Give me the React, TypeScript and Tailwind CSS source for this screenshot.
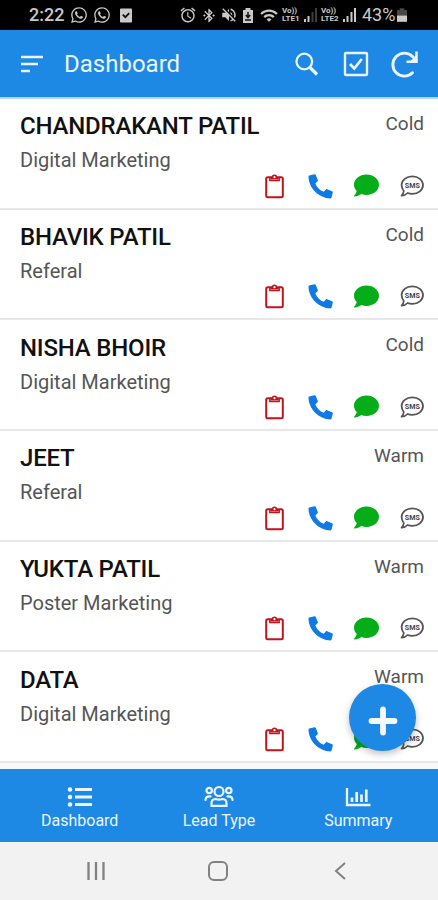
import React from "react";
import { FaComment, FaWhatsapp } from "react-icons/fa";
import { MdAlarm, MdBluetoothConnected, MdVolumeOff, MdWifi } from "react-icons/md";

const leads = [
  { name: "CHANDRAKANT PATIL", source: "Digital Marketing", status: "Cold" },
  { name: "BHAVIK PATIL", source: "Referal", status: "Cold" },
  { name: "NISHA BHOIR", source: "Digital Marketing", status: "Cold" },
  { name: "JEET", source: "Referal", status: "Warm" },
  { name: "YUKTA PATIL", source: "Poster Marketing", status: "Warm" },
  { name: "DATA", source: "Digital Marketing", status: "Warm" },
];

function Network({ sim }: { sim: number }) {
  return (
    <div className="flex shrink-0 items-center">
      <div className="flex w-[21px] flex-col text-[8px] leading-[8px] font-bold">
        <span className="block h-[8px]">Vo))</span>
        <span className="block h-[8px]">LTE{sim}</span>
      </div>
      <svg className="h-[14px] w-[15px]" viewBox="0 0 15 14" fill="currentColor">
        <path d="M1 11h2v3H1z" />
        <path d="M4.500 8h2v6h-2z" />
        <path d="M8.500 4h2v10h-2z" opacity={sim === 1 ? 0.3 : 1} />
        <path d="M12 0h2v14h-2z" opacity={sim === 1 ? 0.3 : 1} />
      </svg>
    </div>
  );
}

function StatusBar() {
  return (
    <div className="flex h-[30px] shrink-0 items-center bg-black pl-[29px] text-[#c9c9c9]">
      <span className="w-[41px] shrink-0 text-[18px] leading-none font-medium">2:22</span>
      <FaWhatsapp className="h-[18px] w-[18px] shrink-0" />
      <FaWhatsapp className="ml-[5px] h-[18px] w-[18px] shrink-0" />
      <svg className="ml-[9px] h-[15px] w-[12px] shrink-0" viewBox="0 0 13 15">
        <rect width="13" height="15" rx="1" fill="currentColor" />
        <path d="M3 6.500l2.800 2.800L10 5" fill="none" stroke="#111" strokeWidth="2" />
      </svg>
      <MdAlarm className="ml-[47px] h-[18px] w-[18px] shrink-0" />
      <MdBluetoothConnected className="ml-[4px] h-[17px] w-[16px] shrink-0" />
      <MdVolumeOff className="ml-[3px] h-[18px] w-[18px] shrink-0" />
      <svg className="ml-[4px] h-[15px] w-[12px] shrink-0" viewBox="0 0 12 15">
        <path d="M3.500 0h5v2H11v13H1V2h2.500z" fill="currentColor" />
        <path d="M6 4v5M3.800 7L6 9.500 8.200 7M3 12h6" fill="none" stroke="#111" strokeWidth="1.500" />
      </svg>
      <MdWifi className="ml-[5px] h-[19px] w-[20px] shrink-0" />
      <div className="ml-[3px] flex shrink-0 gap-[3px]">
        <Network sim={1} />
        <Network sim={2} />
      </div>
      <span className="ml-[5px] w-[35px] shrink-0 text-[18px] leading-none">43%</span>
      <svg className="h-[14px] w-[10px] shrink-0" viewBox="0 0 11 15" fill="currentColor">
        <path d="M3 0h5v2h3v6H0V2h3z" opacity="0.350" />
        <path d="M0 8h11v7H0z" />
      </svg>
    </div>
  );
}

function Header() {
  return (
    <header className="flex h-[69px] shrink-0 items-center border-b-2 border-[#afd5f7] bg-[#1e88e5] text-[#eaf5ff]">
      <svg className="ml-[20px] h-[20px] w-[24px]" viewBox="0 0 24 20" stroke="currentColor" strokeWidth="2.600">
        <path d="M1 3h22M1 10h17M1 17h9" />
      </svg>
      <h1 className="ml-[20px] w-[230px] text-[24px] leading-[30px] font-normal">Dashboard</h1>
      <svg className="h-[26px] w-[26px]" viewBox="0 0 26 26" fill="none" stroke="currentColor">
        <circle cx="10.300" cy="10.500" r="7.800" strokeWidth="2.300" />
        <path d="M16 16.500l7 7" strokeWidth="3.200" />
      </svg>
      <svg className="ml-[23px] h-[26px] w-[26px]" viewBox="0 0 26 26" fill="none" stroke="currentColor" strokeWidth="2.400">
        <rect x="2" y="2" width="22" height="22" rx="1" />
        <path d="M7 13l4.300 4.500 7.500-9.500" strokeWidth="2.700" />
      </svg>
      <svg className="ml-[21px] h-[28px] w-[30px]" viewBox="0 0 30 28" fill="none" stroke="currentColor">
        <path d="M22.500 22.800A11.500 11.500 0 1 1 22.500 6.500L26 10" strokeWidth="2.900" strokeLinecap="round" />
        <path d="M26.500 1.500v10.300H16.500" strokeWidth="2.500" />
        <path d="M26.500 5v7h-7z" fill="currentColor" stroke="none" />
      </svg>
    </header>
  );
}

function ClipboardIcon() {
  return (
    <svg className="h-[26px] w-[20px]" viewBox="0 0 20 26" fill="none" stroke="#c1141b">
      <rect x="1.200" y="4.200" width="16.600" height="20" rx="1.500" strokeWidth="2" />
      <path d="M4.800 4.500v3h9.400v-3" strokeWidth="1.400" />
      <path d="M6 6V4.500h1.500a2 2 0 0 1 4 0H13V6z" fill="#c1141b" strokeWidth="1.200" />
      <path d="M7.800 4.200a1.700 1.700 0 0 1 3.400 0" strokeWidth="2" />
      <circle cx="9.500" cy="4.200" r="1.100" fill="white" stroke="none" />
    </svg>
  );
}

function PhoneIcon() {
  return (
    <svg className="h-[26px] w-[26px]" viewBox="0 0 26 26" fill="#0f7ae5">
      <path d="M1.200 2.500L6.500 1.300c.6-.1 1.100.1 1.300.7l2 5c.2.500.1 1-.3 1.300L7.300 10.400c1.700 4 4.500 6.800 8.400 8.400l2.100-2.300c.3-.4.800-.5 1.300-.3l5 2.100c.6.200.8.700.7 1.300l-1.200 5c-.1.500-.5.800-1.100.8C11 25.300.6 15 .5 3.500c0-.6.200-.9.700-1z" />
    </svg>
  );
}

function SmsIcon() {
  return (
    <svg className="h-[26px] w-[26px]" viewBox="0 0 26 26">
      <path d="M13.300 3.300c6 0 10.700 3.900 10.700 8.800s-4.700 8.800-10.700 8.800c-1.700 0-3.300-.3-4.700-.9-1.400 1.500-3.300 2.500-6 2.700 1.300-1.300 2-2.900 2.200-4.700-1.400-1.600-2.200-3.700-2.200-5.900 0-4.900 4.700-8.800 10.700-8.800z" fill="white" stroke="#555" strokeWidth="1.800" strokeLinejoin="round" />
      <text x="13.300" y="15.200" textAnchor="middle" fontSize="8" fontWeight="700" fill="#444" textLength="15" lengthAdjust="spacingAndGlyphs">SMS</text>
    </svg>
  );
}

function LeadRow({ lead }: { lead: (typeof leads)[number] }) {
  return (
    <li className="flex h-[110.7px] shrink-0 justify-between border-b-2 border-[#e7e7e7] pr-[13px] pl-[20px]">
      <div className="pt-[12.300px]">
        <h2 className="text-[24px] leading-[30px] font-medium tracking-[-0.2px] whitespace-nowrap text-[#111]">{lead.name}</h2>
        <p className="mt-[5px] text-[20px] leading-[28px] text-[#555]">{lead.source}</p>
      </div>
      <div className="flex flex-col items-end">
        <span className="mt-[12px] mr-px text-[19px] leading-[26px] text-[#555]">{lead.status}</span>
        <div className="mt-[35.500px] flex items-center">
          <ClipboardIcon />
          <span className="ml-[23px]"><PhoneIcon /></span>
          <FaComment className="ml-[20px] h-[25px] w-[25px] text-[#05ad18]" />
          <span className="ml-[20px]"><SmsIcon /></span>
        </div>
      </div>
    </li>
  );
}

function ListIcon() {
  return (
    <svg className="h-[22px] w-[26px]" viewBox="0 0 26 22" fill="none" stroke="currentColor">
      <path d="M8 3.500h17M8 11h17M8 18.500h17" strokeWidth="3" />
      <path d="M3 3.500h.01M3 11h.01M3 18.500h.01" strokeWidth="4.600" strokeLinecap="round" />
    </svg>
  );
}

function PeopleIcon() {
  return (
    <svg className="ml-px h-[23px] w-[32px]" viewBox="0 0 32 23" fill="none" stroke="currentColor" strokeWidth="2.200" strokeLinecap="round">
      <circle cx="16" cy="6.500" r="4.500" />
      <circle cx="6.200" cy="5.500" r="2.700" />
      <circle cx="25.800" cy="5.500" r="2.700" />
      <path d="M8.500 20.800v-2.600c0-2.800 2-4.200 4.400-4.200 2 .8 4.200.8 6.200 0 2.400 0 4.400 1.400 4.400 4.200v2.600zM2.500 15c0-2.300 1.300-3.600 4-3.600h1M29.500 15c0-2.300-1.300-3.600-4-3.600h-1" />
    </svg>
  );
}

function ChartIcon() {
  return (
    <svg className="h-[22px] w-[26px]" viewBox="0 0 26 22" fill="none" stroke="currentColor">
      <path d="M2 2v17h23.500" strokeWidth="2.300" />
      <path d="M7 11.500V16M11.700 6v10M16.500 8.500V16M21.300 3.500V16" strokeWidth="2.700" />
    </svg>
  );
}

function BottomTabs() {
  const tabs = [
    { label: "Dashboard", icon: <ListIcon /> },
    { label: "Lead Type", icon: <PeopleIcon /> },
    { label: "Summary", icon: <ChartIcon /> },
  ];
  return (
    <nav className="flex h-[73px] shrink-0 justify-center bg-[#1e88e5] text-[#eaf5ff]">
      {tabs.map((tab) => (
        <div key={tab.label} className="flex w-[139.3px] flex-col items-center pt-[16px]">
          <div className="flex h-[23px] items-center">{tab.icon}</div>
          <span className="mt-[3px] text-[16px] leading-[20px]">{tab.label}</span>
        </div>
      ))}
    </nav>
  );
}

function SystemNav() {
  return (
    <div className="flex grow items-center bg-[#f2f2f2] pl-[86px] text-[#818181]">
      <svg className="h-[20px] w-[20px]" viewBox="0 0 20 20" stroke="currentColor" strokeWidth="2.300">
        <path d="M2.500 1v18M10 1v18M17.500 1v18" />
      </svg>
      <svg className="ml-[101px] h-[22px] w-[22px]" viewBox="0 0 22 22" fill="none" stroke="currentColor" strokeWidth="2">
        <rect x="2" y="2" width="18" height="18" rx="5" />
      </svg>
      <svg className="ml-[105px] h-[20px] w-[12px]" viewBox="0 0 12 20" fill="none" stroke="currentColor" strokeWidth="2">
        <path d="M11 2L2 10l9 8" />
      </svg>
    </div>
  );
}

export default function App() {
  return (
    <div className="relative flex h-[900px] w-[438px] flex-col overflow-hidden bg-white font-['Roboto',sans-serif]">
      <StatusBar />
      <Header />
      <ul className="flex h-[670px] shrink-0 flex-col overflow-hidden bg-white">
        {leads.map((lead) => (
          <LeadRow key={lead.name} lead={lead} />
        ))}
        <li className="grow bg-[#f8f8f8]" />
      </ul>
      <BottomTabs />
      <SystemNav />
      <button aria-label="Add lead" className="absolute top-[684px] left-[349px] flex h-[67px] w-[67px] items-center justify-center rounded-full bg-[#1e88e5] shadow-[0_3px_7px_rgba(0,0,0,0.25)]">
        <svg className="mt-[6px] h-[30px] w-[30px]" viewBox="0 0 30 30" fill="none" stroke="#f4f8ff" strokeWidth="5.800" strokeLinecap="round">
          <path d="M15 3.500v23M3.500 15h23" />
        </svg>
      </button>
    </div>
  );
}
